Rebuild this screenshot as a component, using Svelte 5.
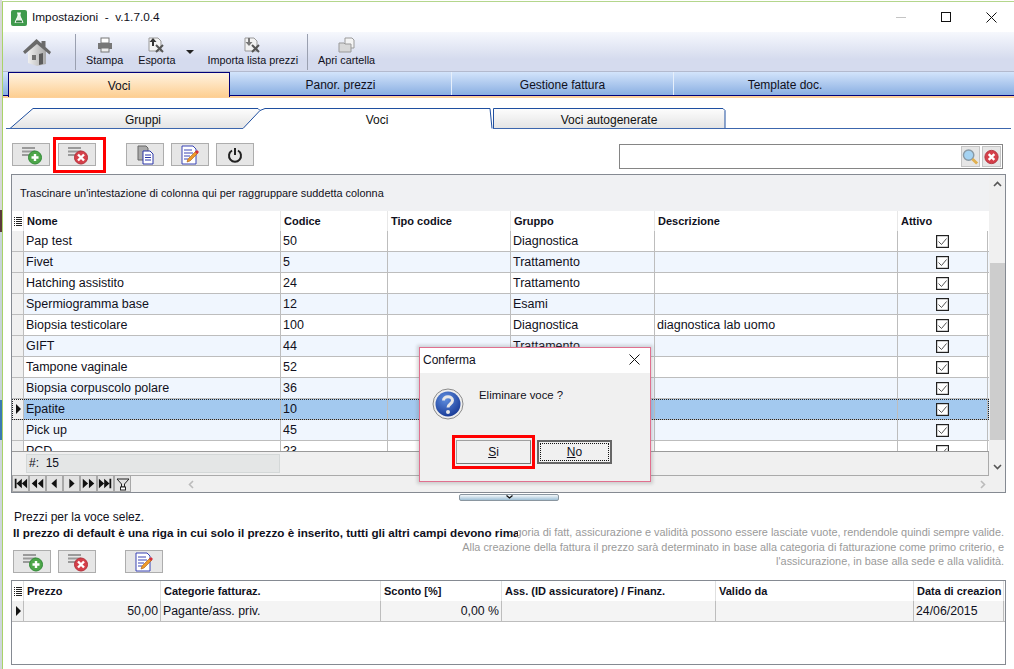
<script>
	const rows = [
		['Pap test', '50', 'Diagnostica', ''],
		['Fivet', '5', 'Trattamento', ''],
		['Hatching assistito', '24', 'Trattamento', ''],
		['Spermiogramma base', '12', 'Esami', ''],
		['Biopsia testicolare', '100', 'Diagnostica', 'diagnostica lab uomo'],
		['GIFT', '44', 'Trattamento', ''],
		['Tampone vaginale', '52', 'Diagnostica', ''],
		['Biopsia corpuscolo polare', '36', 'Diagnostica', ''],
		['Epatite', '10', 'Diagnostica', ''],
		['Pick up', '45', 'Trattamento', ''],
		['PCD', '23', 'Trattamento', '']
	];
	const selected = 8;
	const mainTabs = ['Voci', 'Panor. prezzi', 'Gestione fattura', 'Template doc.'];
	const priceCols = ['Prezzo', 'Categorie fatturaz.', 'Sconto [%]', 'Ass. (ID assicuratore) / Finanz.', 'Valido da', 'Data di creazion'];
	const navShapes = [
		'M2 2h2v11H2zM10 2v11L4 7.500zM16 2v11l-6-5.500z',
		'M8 2v11L2 7.500zM15 2v11L9 7.500z',
		'M11 2v11L5 7.500z',
		'M6 2v11l6-5.500z',
		'M2 2v11l6-5.500zM9 2v11l6-5.500z',
		'M1 2v11l6-5.500zM7 2v11l6-5.500zM13 2h2v11h-2z'
	];
</script>

{#snippet addIcon()}
	<svg width="24" height="20" viewBox="0 0 24 20">
		<path d="M3 2h13v2H3zM3 5.500h13v2H3zM3 9h8v2H3z" fill="#9a9a9a" />
		<circle cx="16" cy="12.500" r="6.500" fill="#4ea64a" stroke="#2f8a35" />
		<path d="M16 9v7M12.500 12.500h7" stroke="#fff" stroke-width="2.400" />
	</svg>
{/snippet}

{#snippet delIcon()}
	<svg width="24" height="20" viewBox="0 0 24 20">
		<path d="M3 2h13v2H3zM3 5.500h13v2H3zM3 9h8v2H3z" fill="#9a9a9a" />
		<circle cx="16" cy="12.500" r="6.500" fill="#d5404a" stroke="#b3303a" />
		<path d="M13 9.500l6 6M19 9.500l-6 6" stroke="#fff" stroke-width="2.400" />
	</svg>
{/snippet}

{#snippet copyIcon()}
	<svg width="20" height="20" viewBox="0 0 20 20">
		<path d="M3 1h8l2 2v12H3z" fill="#aaa" stroke="#666" />
		<path d="M8 6h7l3 3v10H8z" fill="#fff" stroke="#2a35a8" />
		<path d="M10 10h6M10 12.500h6M10 15h6" stroke="#2a35a8" />
	</svg>
{/snippet}

{#snippet editIcon()}
	<svg width="20" height="20" viewBox="0 0 20 20">
		<path d="M2 1h11l3 3v15H2z" fill="#fff" stroke="#3a45b5" />
		<path d="M4 5h8M4 8h9M4 11h6M4 14h4" stroke="#3a45b5" />
		<path d="M7 17l1-3 8-8 2 2-8 8z" fill="#ee9a2a" stroke="#a55a10" stroke-width=".6" />
		<path d="M15 7l2-2 2 2-2 2z" fill="#d5303a" />
	</svg>
{/snippet}

{#snippet gridMenu()}
	<svg width="8" height="9" viewBox="0 0 8 9"><path d="M0 .5h1M2 .5h6M0 2.500h1M2 2.500h6M0 4.500h1M2 4.500h6M0 6.500h1M2 6.500h6M0 8.500h1M2 8.500h6" stroke="#222" /></svg>
{/snippet}

<div class="desk">
	<div class="strip"></div>
	<div class="win">
		<header class="title">
			<svg class="logo" width="16" height="16" viewBox="0 0 16 16">
				<rect width="16" height="16" rx="2" fill="#3f9a4c" />
				<path d="M6 3h4M7 3v3L4 12.500h8L9 6V3" fill="#e6f2e6" stroke="#fff" />
				<path d="M5.500 10.500h5l1 2h-7z" fill="#2d7a3a" />
			</svg>
			<span class="title-text">Impostazioni &nbsp;-&nbsp; v.1.7.0.4</span>
			<div class="controls">
				<span class="min"></span>
				<span class="max"></span>
				<svg width="11" height="11" viewBox="0 0 11 11"><path d="M.5 .5l10 10M10.500 .5l-10 10" stroke="#111" /></svg>
			</div>
		</header>

		<div class="toolbar">
			<div class="home">
				<svg width="30" height="28" viewBox="0 0 30 28">
					<defs>
						<linearGradient id="wall" x1="0" y1="0" x2="1" y2="0">
							<stop offset="0" stop-color="#f0f0f0" />
							<stop offset="1" stop-color="#a8a8a8" />
						</linearGradient>
					</defs>
					<path d="M6 13l9-8 9 8v13L15 28 6 25z" fill="url(#wall)" />
					<path d="M1 13.500L14.500 1l5 4.500V3h4v6l5.500 5-1.500 2.500L15 6 3 16z" fill="#6a6a6a" />
					<rect x="10" y="17" width="4" height="5" fill="#707070" />
					<path d="M17 16l4-1v11l-4 1z" fill="#5c5c5c" />
				</svg>
			</div>
			<span class="sep"></span>
			<div class="tool stampa">
				<svg width="16" height="16" viewBox="0 0 16 16">
					<rect x="4" y="1" width="8" height="5" fill="#fff" stroke="#777" />
					<rect x="1" y="6" width="14" height="6" fill="#777" />
					<rect x="4" y="11" width="8" height="4" fill="#eee" stroke="#777" />
				</svg>
				<span>Stampa</span>
			</div>
			<div class="tool esporta">
				<svg width="18" height="16" viewBox="0 0 18 16">
					<path d="M1 1h9l3 3v10H1z" fill="#f2f2f2" stroke="#999" />
					<path d="M5 1L1.500 5H4v4h2V5h2.500z" fill="#333" />
					<path d="M8 8l7 7M15 8l-7 7" stroke="#555" stroke-width="2" />
				</svg>
				<span>Esporta</span>
			</div>
			<span class="caret"></span>
			<div class="tool importa">
				<svg width="18" height="16" viewBox="0 0 18 16">
					<path d="M1 1h9l3 3v10H1z" fill="#f2f2f2" stroke="#999" />
					<path d="M5 9L1.500 5H4V1h2v4h2.500z" fill="#777" />
					<path d="M8 8l7 7M15 8l-7 7" stroke="#555" stroke-width="2" />
				</svg>
				<span>Importa lista prezzi</span>
			</div>
			<span class="sep sep2"></span>
			<div class="tool apri">
				<svg width="18" height="16" viewBox="0 0 18 16">
					<path d="M7 1h7l2 2v8H7z" fill="#f4f4f4" stroke="#999" />
					<path d="M1 6h5l1 1h6v8H1z" fill="#d8d8d8" stroke="#999" />
				</svg>
				<span>Apri cartella</span>
			</div>
		</div>

		<nav class="main-tabs">
			{#each mainTabs as tab, i}
				<div class="main-tab" class:on={i === 0}>{tab}</div>
			{/each}
		</nav>
		<div class="orange"></div>

		<div class="sub-tabs">
			<svg class="sub-shape" width="1011" height="21" viewBox="0 0 1011 21">
				<defs>
					<linearGradient id="tabfill" x1="0" y1="0" x2="0" y2="1">
						<stop offset="0" stop-color="#fdfdfd" />
						<stop offset="1" stop-color="#e4e4e4" />
					</linearGradient>
				</defs>
				<path d="M7 20.500L30 .5H255l2 2-17 18z" fill="url(#tabfill)" stroke="#1f4fa0" />
				<path d="M257 2.500l5-2H487l2 20" fill="#fff" stroke="#1f4fa0" />
				<path d="M490.500 20.500V.5H720l2 2v18z" fill="url(#tabfill)" stroke="#1f4fa0" />
				<path d="M3 20.500h237M490 20.500h518" stroke="#3c66ad" fill="none" />
			</svg>
			<span class="sub gruppi">Gruppi</span>
			<span class="sub voci">Voci</span>
			<span class="sub auto">Voci autogenerate</span>
		</div>

		<div class="actions">
			<div class="btns">
				<button class="btn">{@render addIcon()}</button>
				<button class="btn del">{@render delIcon()}<span class="mark"></span></button>
				<button class="btn gap-l">{@render copyIcon()}</button>
				<button class="btn">{@render editIcon()}</button>
				<button class="btn">
					<svg width="16" height="16" viewBox="0 0 16 16">
						<path d="M5 3.500a6 6 0 1 0 6 0" fill="none" stroke="#222" stroke-width="2" />
						<path d="M8 1v7" stroke="#222" stroke-width="2" />
					</svg>
				</button>
			</div>
			<div class="search">
				<button class="sbtn">
					<svg width="18" height="18" viewBox="0 0 18 18">
						<circle cx="7" cy="7" r="5.500" fill="#a5d3f2" stroke="#8a9aa5" stroke-width="1.500" />
						<path d="M11 11l5 5" stroke="#e0b050" stroke-width="3" />
					</svg>
				</button>
				<button class="sbtn">
					<svg width="18" height="18" viewBox="0 0 18 18">
						<circle cx="9" cy="9" r="7" fill="#d5404a" stroke="#b3303a" />
						<path d="M6 6l6 6M12 6l-6 6" stroke="#fff" stroke-width="2.500" />
					</svg>
				</button>
			</div>
		</div>

		<section class="grid">
			<div class="grid-top">
				<div class="grid-main">
					<div class="group-bar">Trascinare un'intestazione di colonna qui per raggruppare suddetta colonna</div>
					<div class="head cols">
						<span class="mk">{@render gridMenu()}</span>
						<span>Nome</span><span>Codice</span><span>Tipo codice</span><span>Gruppo</span><span>Descrizione</span><span>Attivo</span>
					</div>
					<div class="rows">
						{#each rows as r, i}
							<div class="row cols" class:alt={i % 2 === 1} class:sel={i === selected}>
								<span class="mk">
									{#if i === selected}<i class="arrow"></i>{/if}
								</span>
								<span>{r[0]}</span>
								<span>{r[1]}</span>
								<span></span>
								<span>{r[2]}</span>
								<span>{r[3]}</span>
								<span class="chk">
									<svg width="13" height="13" viewBox="0 0 13 13">
										<rect x=".5" y=".5" width="12" height="12" fill="#fff" stroke="#222" stroke-width="1.400" />
										<path d="M2.500 6.500l3 3 5-6" fill="none" stroke="#555" />
									</svg>
								</span>
							</div>
						{/each}
					</div>
					<div class="foot">
						<div class="count">#: &nbsp;15</div>
					</div>
				</div>
				<div class="vscroll">
					<svg width="9" height="6" viewBox="0 0 9 6"><path d="M1 5l3.500-3.500L8 5" fill="none" stroke="#555" stroke-width="1.600" /></svg>
					<div class="thumb"></div>
					<svg width="9" height="6" viewBox="0 0 9 6"><path d="M1 1l3.500 3.500L8 1" fill="none" stroke="#555" stroke-width="1.600" /></svg>
				</div>
			</div>
			<div class="nav">
				{#each navShapes as d}
					<span class="nav-btn"><svg width="15" height="15" viewBox="0 0 17 15"><path {d} fill="#111" /></svg></span>
				{/each}
				<span class="nav-btn"><svg width="14" height="14" viewBox="0 0 14 14"><path d="M1 2h12L8.500 7v3h-3V7z" fill="none" stroke="#222" /><rect x="4.500" y="10" width="5" height="3" fill="#fff" stroke="#222" /></svg></span>
				<svg class="h-l" width="6" height="9" viewBox="0 0 6 9"><path d="M5 1L1.500 4.500 5 8" fill="none" stroke="#bbb" stroke-width="1.600" /></svg>
				<svg class="h-r" width="6" height="9" viewBox="0 0 6 9"><path d="M1 1l3.500 3.500L1 8" fill="none" stroke="#bbb" stroke-width="1.600" /></svg>
			</div>
		</section>

		<div class="splitter">
			<svg width="7" height="4" viewBox="0 0 7 4"><path d="M.5 .5l3 2.500 3-2.500" fill="none" stroke="#111" stroke-width="1.300" /></svg>
		</div>

		<div class="prices-top">
			<div class="prices-left">
				<p class="l1">Prezzi per la voce selez.</p>
				<p class="l2">Il prezzo di default è una riga in cui solo il prezzo è inserito, tutti gli altri campi devono rimanere vuoti.</p>
				<div class="btns low">
					<button class="btn">{@render addIcon()}</button>
					<button class="btn">{@render delIcon()}</button>
					<button class="btn gap-m">{@render editIcon()}</button>
				</div>
			</div>
			<div class="prices-note">
				<div>La categoria di fatt, assicurazione e validità possono essere lasciate vuote, rendendole quindi sempre valide.</div>
				<div>Alla creazione della fattura il prezzo sarà determinato in base alla categoria di fatturazione come primo criterio, e</div>
				<div>l'assicurazione, in base alla sede e alla validità.</div>
			</div>
		</div>

		<section class="price-grid">
			<div class="p-head pcols">
				<span class="mk">{@render gridMenu()}</span>
				{#each priceCols as c}<span>{c}</span>{/each}
			</div>
			<div class="p-row pcols">
				<span class="mk"><i class="arrow"></i></span>
				<span class="r">50,00</span>
				<span>Pagante/ass. priv.</span>
				<span class="r">0,00 %</span>
				<span></span>
				<span></span>
				<span>24/06/2015</span>
			</div>
		</section>
	</div>

	<div class="dialog">
		<div class="d-title">
			<span>Conferma</span>
			<svg width="11" height="11" viewBox="0 0 11 11"><path d="M.5 .5l10 10M10.500 .5l-10 10" stroke="#111" /></svg>
		</div>
		<div class="d-body">
			<svg width="32" height="32" viewBox="0 0 32 32">
				<defs>
					<radialGradient id="q" cx=".4" cy=".3" r=".8">
						<stop offset="0" stop-color="#5f8fe0" />
						<stop offset="1" stop-color="#12328f" />
					</radialGradient>
				</defs>
				<circle cx="16" cy="16" r="15" fill="#eee" stroke="#8a8a8a" />
				<circle cx="16" cy="16" r="12.500" fill="url(#q)" />
				<path d="M11.500 12.500c0-5 9-5 9 0 0 3.500-4.500 3.500-4.500 7" fill="none" stroke="#e8e8e8" stroke-width="3" />
				<circle cx="16" cy="24" r="2" fill="#e8e8e8" />
			</svg>
			<span class="d-msg">Eliminare voce ?</span>
		</div>
		<div class="d-btns">
			<button class="d-btn si"><u>S</u>i<span class="mark"></span></button>
			<button class="d-btn no"><span class="dots"><u>N</u>o</span></button>
		</div>
	</div>
</div>

<style>
	:global(body) {
		background: #fff;
	}

	.desk {
		position: relative;
		display: flex;
		width: 1014px;
		height: 669px;
		overflow: hidden;
		font-family: 'Liberation Sans', Arial, sans-serif;
		font-size: 12px;
		color: #101020;
	}

	.strip {
		width: 2px;
		flex: none;
		background: linear-gradient(#d8d8d8 0, #d8d8d8 210px, #5b3a3a 210px, #5b3a3a 232px, #c8d4d8 232px, #c8d4d8 400px, #3a7ab0 400px, #3a7ab0 440px, #cfd6dc 440px);
	}

	.win {
		flex: 1;
		min-width: 0;
		margin-top: 1px;
		border-top: 1px solid #b4d68c;
		border-left: 1px solid #a9d368;
		background: #fff;
	}

	p {
		margin: 0;
	}

	button {
		font: inherit;
		color: inherit;
		padding: 0;
	}

	.title {
		display: flex;
		align-items: center;
		height: 30px;
		padding-left: 8px;
	}

	.logo {
		margin-top: 1px;
	}

	.title-text {
		margin-left: 5px;
		font-size: 11.800px;
	}

	.controls {
		display: flex;
		align-items: center;
		margin-left: auto;
		padding-right: 17px;
		height: 100%;
		gap: 35px;
	}

	.min {
		width: 10px;
		height: 1px;
		background: #c4c4c4;
	}

	.max {
		width: 10px;
		height: 10px;
		border: 1px solid #111;
		box-sizing: border-box;
	}

	.toolbar {
		position: relative;
		display: flex;
		height: 40px;
		box-sizing: border-box;
		background: linear-gradient(#f6f8fd, #d5dbee 70%);
		border-bottom: 1px solid #b3bace;
	}

	.home {
		width: 72px;
		flex: none;
		display: flex;
		justify-content: center;
		align-items: center;
		padding-right: 4px;
		box-sizing: border-box;
	}

	.sep {
		width: 1px;
		height: 36px;
		margin-top: 2px;
		flex: none;
		background: #9aa0b0;
	}

	.sep2 {
		margin-left: 9px;
	}

	.tool {
		display: flex;
		flex-direction: column;
		align-items: center;
		padding-top: 5px;
		height: 35px;
		box-sizing: border-box;
		justify-content: space-between;
		white-space: nowrap;
		font-size: 10.800px;
		line-height: 14px;
	}

	.stampa {
		margin-left: 10px;
	}

	.esporta {
		margin-left: 15px;
	}

	.importa {
		margin-left: 13px;
	}

	.apri {
		margin-left: 10px;
	}

	.caret {
		width: 0;
		height: 0;
		margin: 18px 0 0 11px;
		border: 4px solid transparent;
		border-top-color: #222;
		border-bottom: 0;
	}

	.main-tabs {
		display: flex;
		height: 24px;
		box-sizing: border-box;
		padding-left: 5px;
		background: linear-gradient(#d3e4fb, #8aafe2);
		border-bottom: 1px solid #00007a;
	}

	.main-tab {
		flex: none;
		width: 222px;
		box-sizing: border-box;
		display: flex;
		align-items: center;
		justify-content: center;
		border-right: 1px solid #e6effb;
		padding-top: 3px;
	}

	.main-tab:last-child {
		border-right: 0;
	}

	.main-tab.on {
		height: 25px;
		padding-top: 1px;
		background: linear-gradient(#fff3e0, #fdcf92);
		border: 1px solid #00007a;
		border-bottom: 0;
	}

	.orange {
		height: 2px;
		background: #fdd09a;
	}

	.sub-tabs {
		position: relative;
		height: 21px;
		margin-top: 10px;
		display: flex;
		align-items: center;
		color: #111;
	}

	.sub-shape {
		position: absolute;
		left: 0;
		top: 0;
	}

	.sub {
		position: relative;
		text-align: center;
		flex: none;
		padding-top: 2px;
	}

	.gruppi {
		width: 280px;
	}

	.voci {
		width: 188px;
	}

	.auto {
		width: 276px;
	}

	.actions {
		display: flex;
		justify-content: space-between;
		height: 45px;
		box-sizing: border-box;
		padding: 14px 11px 0 9px;
	}

	.btns {
		display: flex;
		gap: 7px;
		height: 23px;
	}

	.btn {
		position: relative;
		width: 38px;
		height: 23px;
		background: #e6e6e6;
		border: 1px solid #adadad;
		display: flex;
		align-items: center;
		justify-content: center;
	}

	.del {
		margin-left: 1px;
	}

	.gap-l {
		margin-left: 23px;
	}

	.gap-m {
		margin-left: 22px;
	}

	.mark {
		position: absolute;
		border: 3.500px solid #f00;
		box-sizing: border-box;
		pointer-events: none;
	}

	.del .mark {
		left: -6px;
		top: -7px;
		width: 53px;
		height: 36px;
	}

	.search {
		display: flex;
		justify-content: flex-end;
		align-items: center;
		gap: 2px;
		width: 384px;
		height: 25px;
		box-sizing: border-box;
		margin-top: 1px;
		border: 1px solid #858585;
		padding-right: 1px;
	}

	.sbtn {
		width: 19px;
		height: 21px;
		background: #e6e6e6;
		border: 1px solid #c4c4c4;
		display: flex;
		align-items: center;
		justify-content: center;
	}

	.grid {
		margin: 0 8px;
		height: 319px;
		box-sizing: border-box;
		border: 1px solid #858a92;
	}

	.grid-top {
		display: flex;
		height: 301px;
	}

	.grid-main {
		width: 977px;
		flex: none;
		background: #fff;
	}

	.group-bar {
		height: 36px;
		width: 977px;
		background: #f0f1f3;
		display: flex;
		align-items: center;
		padding-left: 8px;
		box-sizing: border-box;
		font-size: 10.900px;
	}

	.cols {
		display: grid;
		grid-template-columns: 12px 257px 107px 123px 144px 243px 90px;
	}

	.head {
		height: 20px;
		font-weight: bold;
		font-size: 11px;
		align-items: stretch;
	}

	.head span {
		display: flex;
		align-items: center;
		padding-left: 3px;
		border-right: 1px solid #e8e8e8;
	}

	.head span:last-child {
		border-right: 0;
	}

	.mk {
		display: flex;
		align-items: center;
		justify-content: center;
		background: #f0f0f0;
		border-right: 1px solid #bbb;
		padding: 0 !important;
	}

	.head .mk,
	.p-head .mk {
		background: #fff;
		justify-content: center;
	}

	.arrow {
		width: 0;
		height: 0;
		border-left: 5px solid #111;
		border-top: 5px solid transparent;
		border-bottom: 5px solid transparent;
		margin-left: 2px;
	}

	.rows {
		height: 220px;
		overflow: hidden;
	}

	.row {
		height: 21px;
		box-sizing: border-box;
		border-bottom: 1px solid #bdbdbd;
		background: #fff;
		font-size: 12.500px;
	}

	.row.alt {
		background: #f0f6fe;
	}

	.row span {
		display: flex;
		align-items: center;
		padding-left: 2px;
		border-right: 1px solid #bdbdbd;
		white-space: nowrap;
		overflow: hidden;
	}

	.row.sel {
		background: #a3c9ef;
		outline: 1px dotted #222;
		outline-offset: -1px;
	}

	.row.sel .mk {
		background: #f0f0f0;
	}

	.row .chk {
		justify-content: center;
		padding-left: 0;
	}

	.foot {
		height: 25px;
		box-sizing: border-box;
		border-top: 1px solid #9a9a9a;
		border-bottom: 1px solid #aaa;
		border-right: 1px solid #aaa;
		background: #f0f0f0;
		padding: 2px 0 0 14px;
	}

	.count {
		width: 254px;
		height: 19px;
		box-sizing: border-box;
		background: #e4e6e6;
		border: 1px solid #d4d8d8;
		padding-left: 2px;
		line-height: 17px;
	}

	.vscroll {
		flex: 1;
		background: #f0f0f0;
		display: flex;
		flex-direction: column;
		align-items: center;
		padding-top: 6px;
		box-sizing: border-box;
	}

	.thumb {
		width: 15px;
		height: 177px;
		margin: 76px 0 24px;
		background: #cdcdcd;
	}

	.nav {
		position: relative;
		display: flex;
		height: 16px;
		background: #f0f0f0;
	}

	.nav-btn {
		width: 15px;
		height: 15px;
		border: 1px solid #a8a8a8;
		background: #e2e2e2;
		display: flex;
		align-items: center;
		justify-content: center;
		margin-top: -1px;
	}

	.h-l {
		position: absolute;
		left: 176px;
		top: 4px;
	}

	.h-r {
		position: absolute;
		left: 968px;
		top: 4px;
	}

	.splitter {
		width: 100px;
		height: 7px;
		margin: 1px 0 0 456px;
		border: 1px solid #8a96a0;
		border-radius: 2px;
		box-sizing: border-box;
		background: linear-gradient(#f4f8fb, #9fc0d6);
		display: flex;
		justify-content: center;
		align-items: flex-start;
	}

	.prices-top {
		display: flex;
		height: 70px;
		margin-top: 9px;
	}

	.prices-left {
		position: relative;
		z-index: 1;
		width: 515px;
		flex: none;
		overflow: hidden;
		padding-left: 10px;
		box-sizing: border-box;
	}

	.l1 {
		height: 15px;
		line-height: 15px;
		padding-left: 1px;
	}

	.l2 {
		height: 15px;
		line-height: 15px;
		font-size: 11.700px;
		font-weight: bold;
		white-space: nowrap;
		overflow: hidden;
		background: #fff;
	}

	.low {
		margin-top: 10px;
	}

	.prices-note {
		flex: 1;
		min-width: 0;
		margin-left: -100px;
		padding: 15px 10px 0 0;
		color: #9a9a9a;
		font-size: 10.900px;
		line-height: 14.500px;
		overflow: hidden;
	}

	.prices-note div {
		display: flex;
		justify-content: flex-end;
		white-space: nowrap;
	}

	.price-grid {
		margin: 0 8px;
		height: 85px;
		box-sizing: border-box;
		border: 1px solid #858a92;
	}

	.pcols {
		display: grid;
		grid-template-columns: 12px 137px 220px 121px 214px 198px 90px;
	}

	.p-head {
		height: 20px;
		font-weight: bold;
		font-size: 11px;
	}

	.p-head span {
		display: flex;
		align-items: center;
		padding-left: 3px;
		border-right: 1px solid #e0e0e0;
		white-space: nowrap;
		overflow: hidden;
	}

	.p-row {
		height: 20px;
		background: #f4f4f4;
		border-bottom: 1px solid #bdbdbd;
		font-size: 12.300px;
	}

	.p-row span {
		display: flex;
		align-items: center;
		padding: 0 2px;
		border-right: 1px solid #bdbdbd;
	}

	.p-row .r {
		justify-content: flex-end;
	}

	.p-row .mk {
		background: #f0f0f0;
	}

	.dialog {
		position: absolute;
		left: 419px;
		top: 347px;
		width: 232px;
		height: 135px;
		box-sizing: border-box;
		background: #f0f0f0;
		border: 1px solid #e0708f;
		box-shadow: 0 0 3px 2px rgba(120, 120, 120, 0.28);
		display: flex;
		flex-direction: column;
	}

	.d-title {
		height: 25px;
		background: #fff;
		display: flex;
		align-items: center;
		justify-content: space-between;
		padding: 0 10px 2px 3px;
		box-sizing: border-box;
		flex: none;
	}

	.d-body {
		display: flex;
		align-items: flex-start;
		gap: 15px;
		padding: 15px 0 0 12px;
		height: 67px;
		box-sizing: border-box;
		flex: none;
	}

	.d-msg {
		margin-top: 1px;
		font-size: 11.400px;
	}

	.d-btns {
		display: flex;
		gap: 6px;
		margin: 0 0 0 36px;
	}

	.d-btn {
		position: relative;
		width: 75px;
		height: 24px;
		background: #f0f0f0;
		border: 1px solid #a0a0a0;
		border-right-color: #777;
		border-bottom-color: #777;
		display: flex;
		align-items: center;
		justify-content: center;
	}

	.si .mark {
		left: -5px;
		top: -6px;
		width: 83px;
		height: 34px;
		border-width: 3px;
	}

	.no {
		border: 2px solid #666;
		padding: 1px;
	}

	.dots {
		flex: 1;
		align-self: stretch;
		border: 1px dotted #111;
		display: flex;
		align-items: center;
		justify-content: center;
	}
</style>
